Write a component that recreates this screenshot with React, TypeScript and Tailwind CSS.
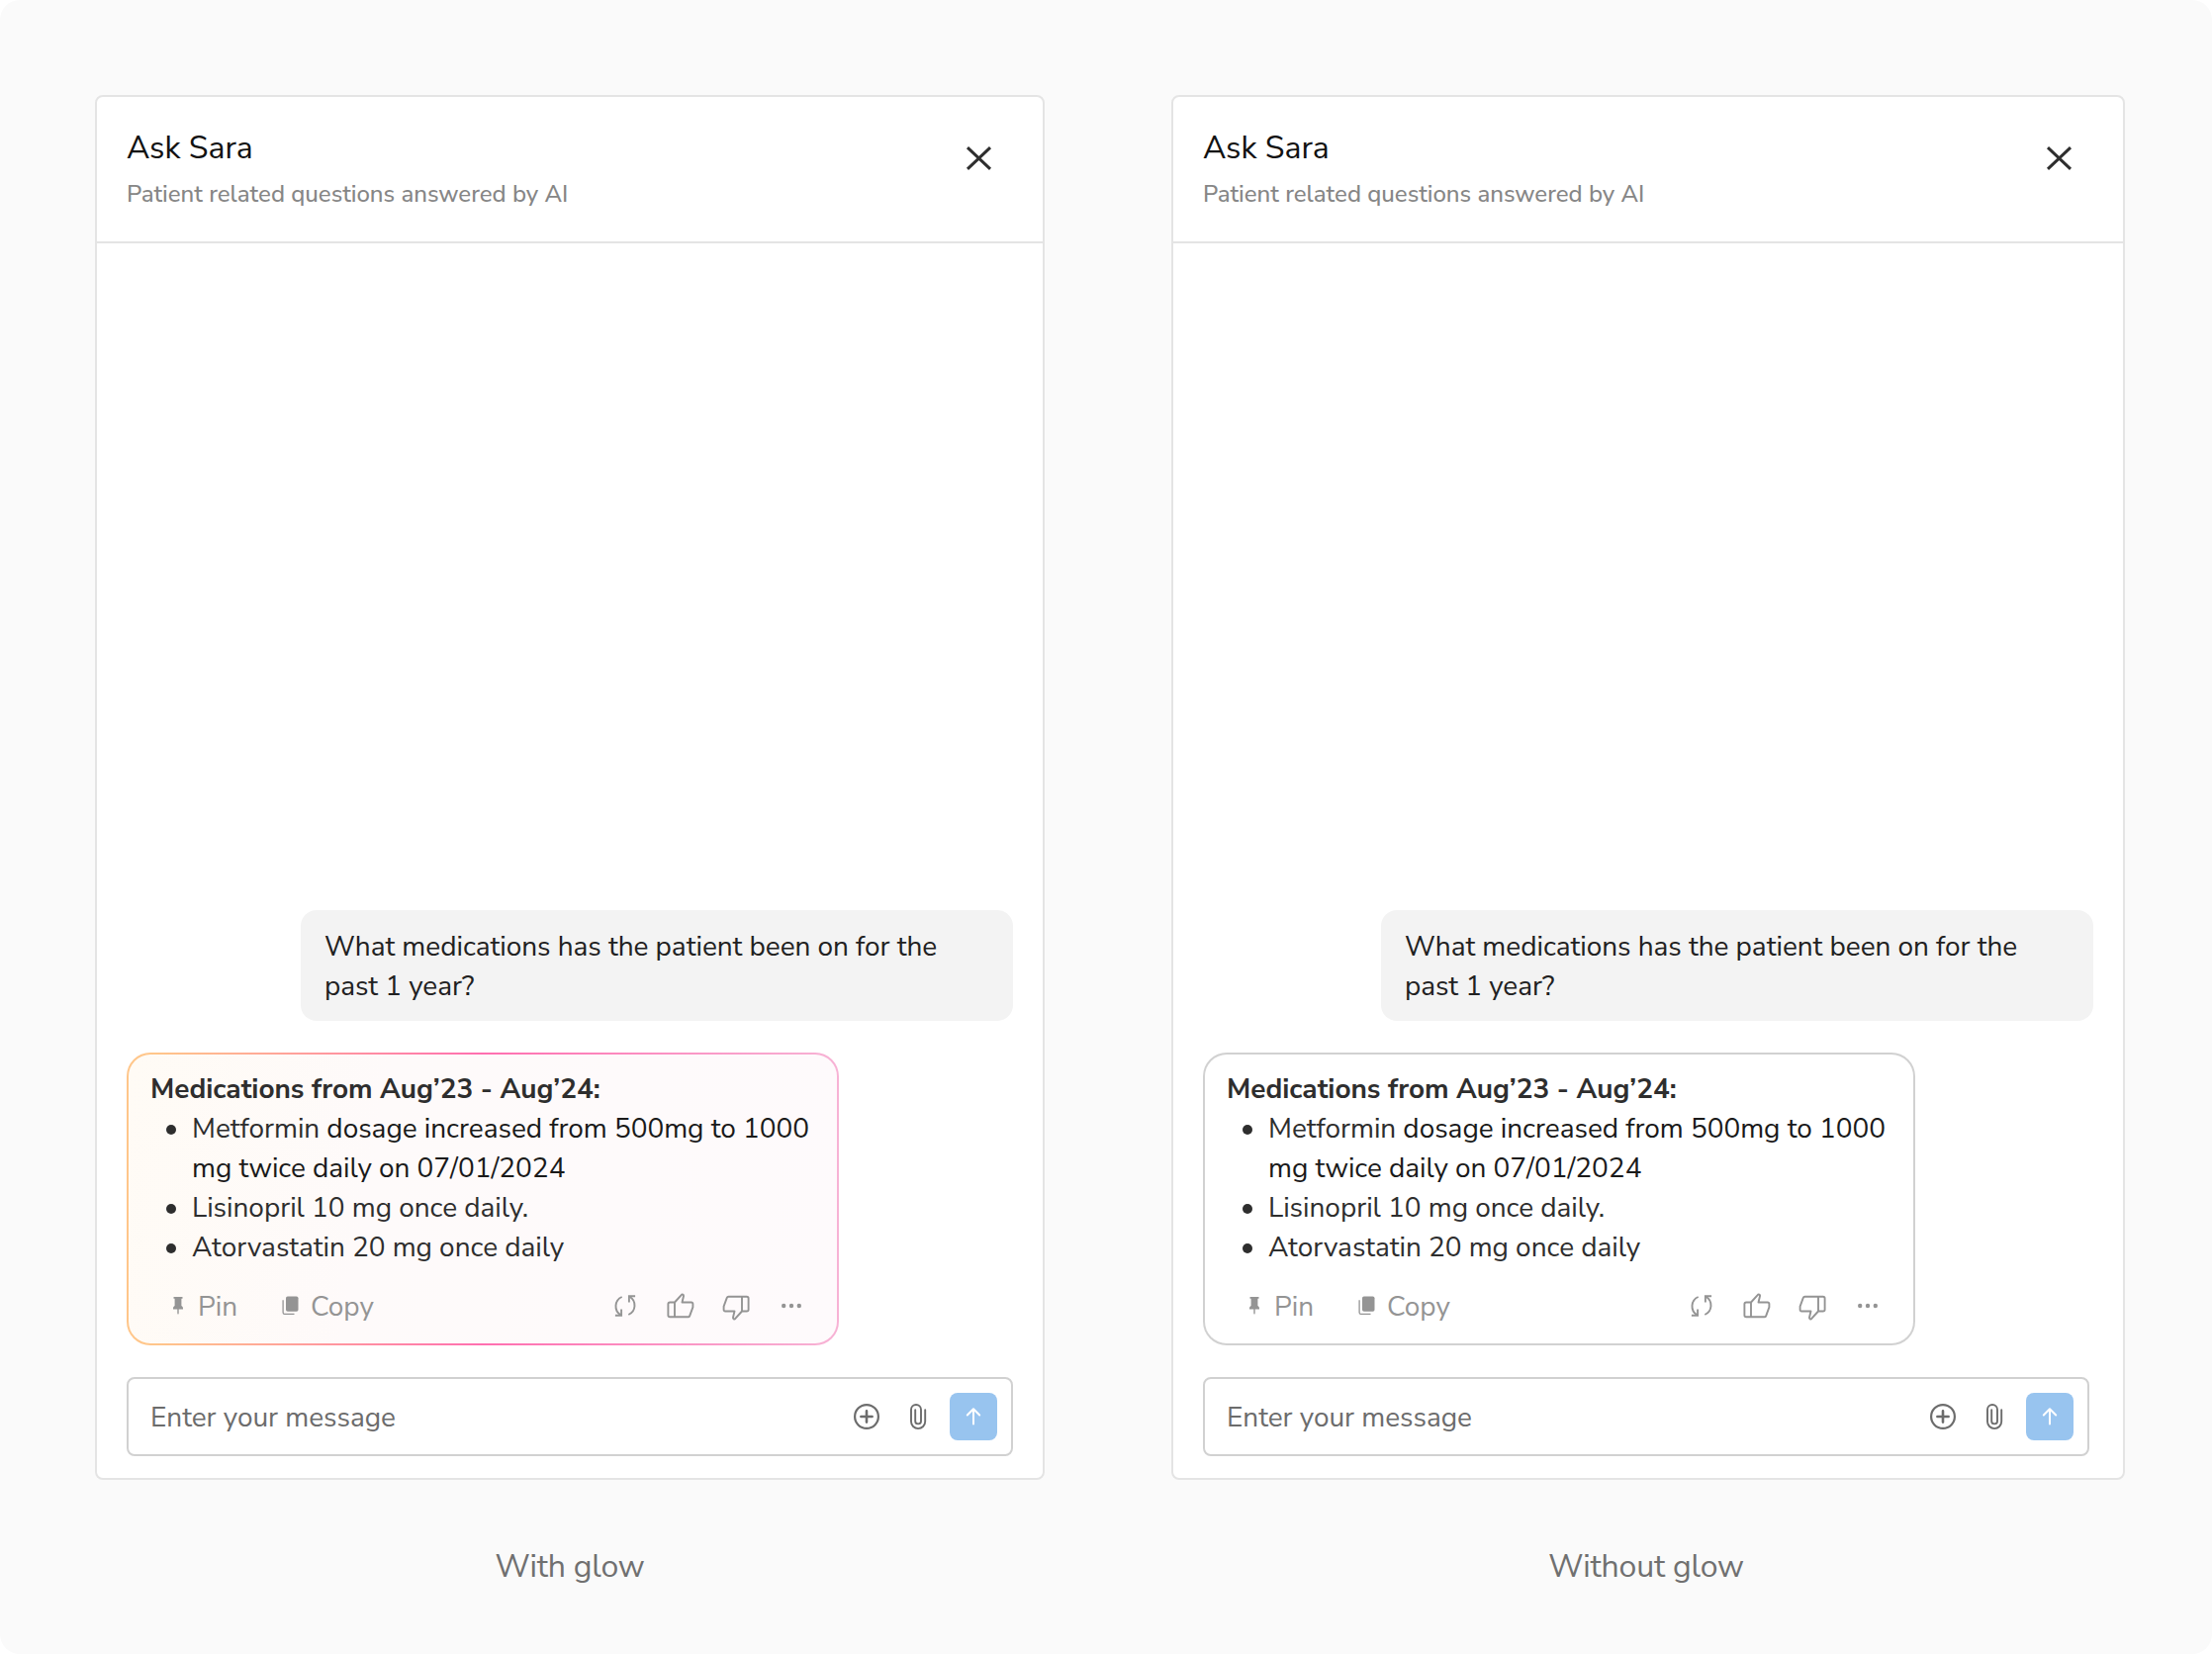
import type { ReactNode } from "react";

function CloseIcon() {
  return (
    <svg className="size-8" viewBox="0 0 32 32" fill="none" stroke="#2e2e2e" strokeWidth="3">
      <path d="M4 5.2 27 26.8M27 5.2 4 26.8" />
    </svg>
  );
}

function PinIcon() {
  return (
    <svg className="h-5 w-3" viewBox="0 0 12 20" fill="currentColor">
      <path d="M1.5 1h9v1.7H9.4v7.2c.9.4 1.6 1.500 1.600 2.700v.8H6.700v4.200L6 19l-.7-1.400v-4.200H1v-.8c0-1.200.7-2.300 1.600-2.700V2.700H1.500z" />
    </svg>
  );
}

function CopyIcon() {
  return (
    <svg className="h-5 w-[17px]" viewBox="0 0 17 20" fill="none">
      <rect x="4" y="0.500" width="12.500" height="15.200" rx="1.800" fill="currentColor" />
      <path d="M1.100 4.200v12.600a1.600 1.600 0 0 0 1.600 1.600H12.500" stroke="currentColor" strokeWidth="1.300" />
    </svg>
  );
}

function RegenerateIcon() {
  return (
    <svg className="size-6" viewBox="0 0 24 24" fill="none" stroke="currentColor" strokeWidth="1.900">
      <path d="M8.700 3A10.300 10.300 0 0 0 7.500 21.300" />
      <path d="M1.900 21.800h6.200v-6.200" />
      <path d="M15.300 21A10.300 10.300 0 0 0 16.500 2.700" />
      <path d="M22.100 2.200h-6.200v6.200" />
    </svg>
  );
}

function ThumbIcon({ down = false }: { down?: boolean }) {
  return (
    <svg
      className={down ? "h-[26px] w-7 rotate-180" : "h-[26px] w-7"}
      viewBox="0 0 28 26"
      fill="none"
      stroke="currentColor"
      strokeWidth="1.900"
      strokeLinejoin="round"
    >
      <path d="M8 9.500H3.200a1.800 1.800 0 0 0-1.800 1.800v11.200a1.800 1.800 0 0 0 1.800 1.800H21.500a1.800 1.800 0 0 0 1.700-1.200l3.200-8.700V11a1.500 1.500 0 0 0-1.500-1.500H15.500L17 3.200a1.300 1.300 0 0 0-2.300-1.100L8 9.500v14.800" />
    </svg>
  );
}

function MoreIcon() {
  return (
    <svg className="h-6 w-6" viewBox="0 0 24 24" fill="currentColor">
      <circle cx="4.200" cy="12" r="2.200" />
      <circle cx="12" cy="12" r="2.200" />
      <circle cx="19.800" cy="12" r="2.200" />
    </svg>
  );
}

function AddIcon() {
  return (
    <svg className="size-7" viewBox="0 0 28 28" fill="none" stroke="currentColor" strokeWidth="2.200">
      <circle cx="14" cy="14" r="11.900" />
      <path d="M14 8.400v11.200M8.400 14h11.200" strokeWidth="2.600" strokeLinecap="round" />
    </svg>
  );
}

function ClipIcon() {
  return (
    <svg className="h-7 w-5" viewBox="0 0 20 28" fill="none" stroke="currentColor" strokeWidth="1.900" strokeLinecap="round">
      <path d="M17.200 7.200v11.800a7.100 7.100 0 0 1-14.200 0V7a5 5 0 0 1 10 0v11.500a2.900 2.900 0 0 1-5.800 0V7.200" />
    </svg>
  );
}

function SendIcon() {
  return (
    <svg className="size-6" viewBox="0 0 24 24" fill="none" stroke="#fff" strokeWidth="2" strokeLinecap="round" strokeLinejoin="round">
      <path d="M12 19.500V4.500M5.800 10.500 12 4.300l6.200 6.200" />
    </svg>
  );
}

function Bullet({ children }: { children: ReactNode }) {
  return (
    <li className="flex gap-4">
      <span className="mt-4 size-[10px] shrink-0 rounded-full bg-[#2e2e2e]" />
      <span className="whitespace-nowrap">{children}</span>
    </li>
  );
}

function Answer({ glow }: { glow: boolean }) {
  return (
    <div
      className={
        glow
          ? "h-[296px] w-[720px] rounded-[24px] bg-linear-[90deg,#ffc68a_0%,#ffc68a_4%,#ff6fb0_50%,#f7b3d5_100%] p-[2px]"
          : "h-[296px] w-[720px] rounded-[24px] bg-[#d1d1d1] p-[2px]"
      }
    >
      <div
        className={
          glow
            ? "h-full rounded-[22px] bg-linear-[100deg,#fffbf5_0%,#fefafa_35%,#fefafc_100%] px-[22px] pt-[15px]"
            : "h-full rounded-[22px] bg-white px-[22px] pt-[15px]"
        }
      >
        <p className="font-bold">Medications from Aug’23 - Aug’24:</p>
        <ul className="pl-4">
          <Bullet>
            Metformin <span className="text-[#1a1a1a]">dosage increased from 500mg to 1000<br />mg twice daily on 07/01/2024</span>
          </Bullet>
          <Bullet>Lisinopril 10 mg once daily.</Bullet>
          <Bullet>Atorvastatin 20 mg once daily</Bullet>
        </ul>
        <div className="mt-[19px] flex h-10 items-center pl-[22px] text-[#949494]">
          <PinIcon />
          <span className="ml-[14px] w-[85px] pt-[2px]">Pin</span>
          <CopyIcon />
          <span className="ml-3 pt-[2px]">Copy</span>
          <div className="mr-3 ml-auto flex items-center">
            <RegenerateIcon />
            <span className="ml-[30px] flex"><ThumbIcon /></span>
            <span className="ml-[28px] flex pt-[3px]"><ThumbIcon down /></span>
            <span className="ml-[30px] flex"><MoreIcon /></span>
          </div>
        </div>
      </div>
    </div>
  );
}

function Panel({ glow = false, caption }: { glow?: boolean; caption: string }) {
  return (
    <figure className={glow ? "w-[960px] shrink-0" : "w-[964px] shrink-0"}>
      <section className="flex h-[1400px] flex-col rounded-lg border-2 border-[#e4e4e4] bg-white">
        <header className="flex h-[148px] items-start justify-between border-b-2 border-[#e4e4e4] pt-[30px] pr-[48px] pl-[30px]">
          <div>
            <h1 className="text-[32px] leading-[44px] text-[#121212]">Ask Sara</h1>
            <p className="mt-2 text-[24px] leading-[32px] font-medium text-[#868686]">
              Patient related questions answered by AI
            </p>
          </div>
          <button className="mt-4" aria-label="Close">
            <CloseIcon />
          </button>
        </header>
        <div className="flex flex-1 flex-col justify-end gap-8 px-[30px] pb-[22px] text-[28px] leading-10 tracking-[-0.04px] text-[#2e2e2e]">
          <div className="h-28 w-[720px] self-end rounded-2xl bg-[#f3f3f3] px-6 pt-[17px] text-[#212121]">
            What medications has the patient been on for the past 1 year?
          </div>
          <Answer glow={glow} />
          <div className="flex h-20 w-[896px] items-center rounded-lg border-2 border-[#d1d1d1] bg-white pr-[14px] pl-[22px] text-[#6c6c6c]">
            <span className="flex-1 pt-[2px]">Enter your message</span>
            <AddIcon />
            <span className="mr-[22px] ml-[28px] flex"><ClipIcon /></span>
            <button className="flex size-12 items-center justify-center rounded-lg bg-[#98c4ef]" aria-label="Send">
              <SendIcon />
            </button>
          </div>
        </div>
      </section>
      <figcaption className="mt-[64px] w-[960px] text-center text-[32px] leading-[48px] tracking-[-0.18px] text-[#707070]">
        {caption}
      </figcaption>
    </figure>
  );
}

export default function App() {
  return (
    <div className="overflow-hidden bg-white">
      <main className="flex h-[1672px] w-[2236px] gap-32 rounded-[20px] bg-[#fafafa] py-24 pl-24 font-['Nunito_Sans','Lato','Open_Sans',sans-serif]">
        <Panel glow caption="With glow" />
        <Panel caption="Without glow" />
      </main>
    </div>
  );
}
